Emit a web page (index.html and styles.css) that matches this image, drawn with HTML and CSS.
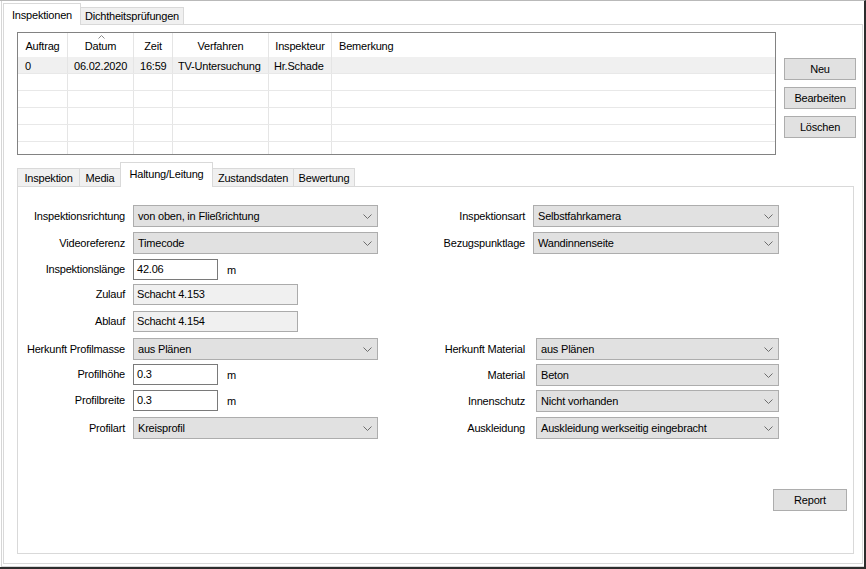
FILE: index.html
```html
<!DOCTYPE html>
<html lang="de">
<head>
<meta charset="utf-8">
<title>Inspektionen</title>
<link rel="stylesheet" href="styles.css">
</head>
<body>
<div class="window">
  <div class="frame">
    <div class="tabstrip outer-tabs">
      <div class="tab active w-insp">Inspektionen</div>
      <div class="tab w-dicht">Dichtheitsprüfungen</div>
    </div>
    <div class="page outer-page">
      <div class="top">
        <div class="list">
          <div class="row head">
            <div class="c c1 center">Auftrag</div>
            <div class="c c2 center sorted">Datum<svg class="sort" width="7" height="4" viewBox="0 0 7 4"><path d="M0.5 3.5 L3.5 0.5 L6.5 3.5" fill="none" stroke="#8a8a8a" stroke-width="1"/></svg></div>
            <div class="c c3 center">Zeit</div>
            <div class="c c4 center">Verfahren</div>
            <div class="c c5 center">Inspekteur</div>
            <div class="c c6 left">Bemerkung</div>
          </div>
          <div class="row data sel">
            <div class="c c1">0</div>
            <div class="c c2">06.02.2020</div>
            <div class="c c3">16:59</div>
            <div class="c c4">TV-Untersuchung</div>
            <div class="c c5">Hr.Schade</div>
            <div class="c c6"></div>
          </div>
          <div class="row data"><div class="c c1"></div><div class="c c2"></div><div class="c c3"></div><div class="c c4"></div><div class="c c5"></div><div class="c c6"></div></div>
          <div class="row data"><div class="c c1"></div><div class="c c2"></div><div class="c c3"></div><div class="c c4"></div><div class="c c5"></div><div class="c c6"></div></div>
          <div class="row data"><div class="c c1"></div><div class="c c2"></div><div class="c c3"></div><div class="c c4"></div><div class="c c5"></div><div class="c c6"></div></div>
          <div class="row data"><div class="c c1"></div><div class="c c2"></div><div class="c c3"></div><div class="c c4"></div><div class="c c5"></div><div class="c c6"></div></div>
          <div class="row data"><div class="c c1"></div><div class="c c2"></div><div class="c c3"></div><div class="c c4"></div><div class="c c5"></div><div class="c c6"></div></div>
        </div>
        <div class="buttons">
          <button class="btn">Neu</button>
          <button class="btn">Bearbeiten</button>
          <button class="btn">Löschen</button>
        </div>
      </div>

      <div class="tabstrip inner-tabs">
        <div class="tab w-i1">Inspektion</div>
        <div class="tab w-i2">Media</div>
        <div class="tab active w-i3">Haltung/Leitung</div>
        <div class="tab w-i4">Zustandsdaten</div>
        <div class="tab w-i5">Bewertung</div>
      </div>
      <div class="page inner-page">
        <div class="form">
          <div class="lbl h22">Inspektionsrichtung</div>
          <div class="fld"><div class="combo"><span>von oben, in Fließrichtung</span><svg width="9" height="5" viewBox="0 0 9 5"><path d="M0.5 0.5 L4.5 4.5 L8.5 0.5" fill="none" stroke="#6d6d6d"/></svg></div></div>
          <div class="lbl h22">Inspektionsart</div>
          <div class="fld"><div class="combo"><span>Selbstfahrkamera</span><svg width="9" height="5" viewBox="0 0 9 5"><path d="M0.5 0.5 L4.5 4.5 L8.5 0.5" fill="none" stroke="#6d6d6d"/></svg></div></div>

          <div class="lbl h22">Videoreferenz</div>
          <div class="fld"><div class="combo"><span>Timecode</span><svg width="9" height="5" viewBox="0 0 9 5"><path d="M0.5 0.5 L4.5 4.5 L8.5 0.5" fill="none" stroke="#6d6d6d"/></svg></div></div>
          <div class="lbl h22">Bezugspunktlage</div>
          <div class="fld"><div class="combo"><span>Wandinnenseite</span><svg width="9" height="5" viewBox="0 0 9 5"><path d="M0.5 0.5 L4.5 4.5 L8.5 0.5" fill="none" stroke="#6d6d6d"/></svg></div></div>

          <div class="lbl h21">Inspektionslänge</div>
          <div class="fld unit"><div class="text">42.06</div><span class="u">m</span></div>
          <div class="empty"></div><div class="empty"></div>

          <div class="lbl h21">Zulauf</div>
          <div class="fld"><div class="ro">Schacht 4.153</div></div>
          <div class="empty"></div><div class="empty"></div>

          <div class="lbl h21">Ablauf</div>
          <div class="fld"><div class="ro">Schacht 4.154</div></div>
          <div class="empty"></div><div class="empty"></div>

          <div class="lbl h22">Herkunft Profilmasse</div>
          <div class="fld"><div class="combo"><span>aus Plänen</span><svg width="9" height="5" viewBox="0 0 9 5"><path d="M0.5 0.5 L4.5 4.5 L8.5 0.5" fill="none" stroke="#6d6d6d"/></svg></div></div>
          <div class="lbl h22">Herkunft Material</div>
          <div class="fld"><div class="combo shift"><span>aus Plänen</span><svg width="9" height="5" viewBox="0 0 9 5"><path d="M0.5 0.5 L4.5 4.5 L8.5 0.5" fill="none" stroke="#6d6d6d"/></svg></div></div>

          <div class="lbl h21">Profilhöhe</div>
          <div class="fld unit"><div class="text">0.3</div><span class="u">m</span></div>
          <div class="lbl h22">Material</div>
          <div class="fld"><div class="combo shift"><span>Beton</span><svg width="9" height="5" viewBox="0 0 9 5"><path d="M0.5 0.5 L4.5 4.5 L8.5 0.5" fill="none" stroke="#6d6d6d"/></svg></div></div>

          <div class="lbl h21">Profilbreite</div>
          <div class="fld unit"><div class="text">0.3</div><span class="u">m</span></div>
          <div class="lbl h22">Innenschutz</div>
          <div class="fld"><div class="combo shift"><span>Nicht vorhanden</span><svg width="9" height="5" viewBox="0 0 9 5"><path d="M0.5 0.5 L4.5 4.5 L8.5 0.5" fill="none" stroke="#6d6d6d"/></svg></div></div>

          <div class="lbl h22">Profilart</div>
          <div class="fld"><div class="combo"><span>Kreisprofil</span><svg width="9" height="5" viewBox="0 0 9 5"><path d="M0.5 0.5 L4.5 4.5 L8.5 0.5" fill="none" stroke="#6d6d6d"/></svg></div></div>
          <div class="lbl h22">Auskleidung</div>
          <div class="fld"><div class="combo shift"><span>Auskleidung werkseitig eingebracht</span><svg width="9" height="5" viewBox="0 0 9 5"><path d="M0.5 0.5 L4.5 4.5 L8.5 0.5" fill="none" stroke="#6d6d6d"/></svg></div></div>
        </div>
        <div class="report">
          <button class="btn btn-report">Report</button>
        </div>
      </div>
    </div>
  </div>
</div>
</body>
</html>
```

FILE: styles.css
```css
* { box-sizing: border-box; }
html, body { margin: 0; padding: 0; background: #fff; }
body {
  font-family: "Liberation Sans", Arial, sans-serif;
  font-size: 11px;
  letter-spacing: -0.2px;
  color: #000;
}

.window {
  width: 866px;
  height: 569px;
  background: #fff;
  border-top: 1px solid #b9b9b9;
  border-right: 2px solid #2d2d2d;
  border-bottom: 2px solid #2d2d2d;
}
.frame {
  height: 100%;
  margin-left: 1px;
  border-left: 1px solid #d6d6d6;
  border-bottom: 1px solid #d6d6d6;
  padding: 2px 0 0 1px;
}

/* tabs */
.tabstrip {
  display: flex;
  align-items: flex-end;
  position: relative;
  z-index: 1;
  margin-bottom: -1px;
}
.tab {
  flex: none;
  border: 1px solid #d9d9d9;
  border-bottom: none;
  background: #f0f0f0;
  text-align: center;
  white-space: nowrap;
  margin-left: -1px;
  margin-bottom: 1px;
}
.tab:first-child { margin-left: 0; }
.tab.active {
  background: #fff;
  margin-bottom: 0;
  position: relative;
  z-index: 2;
}

.outer-tabs { height: 22px; }
.outer-tabs .tab { height: 17px; line-height: 16px; }
.outer-tabs .tab.active { height: 22px; line-height: 20px; padding-top: 1px; }
.w-insp { width: 78px; }
.w-dicht { width: 104px; }

.inner-tabs { height: 25px; margin-top: 7px; }
.inner-tabs .tab { height: 18px; line-height: 18px; }
.inner-tabs .tab.active { height: 25px; line-height: 22px; }
.w-i1 { width: 63px; }
.w-i2 { width: 42px; }
.w-i3 { width: 93px; }
.w-i4 { width: 82px; }
.w-i5 { width: 62px; }

.page {
  border: 1px solid #d9d9d9;
  background: #fff;
}
.outer-page {
  width: 860px;
  height: 540px;
  padding: 7px 0 0 13px;
}

/* top area */
.top {
  display: flex;
  align-items: flex-start;
}
.list {
  flex: none;
  width: 759px;
  height: 123px;
  border: 1px solid #828282;
  overflow: hidden;
}
.row { display: flex; }
.row.head { height: 24px; }
.row.data { height: 17px; border-bottom: 1px solid #e8e8e8; }
.row.sel { background: #f0f0f0; }
.c {
  flex: none;
  border-right: 1px solid #e5e5e5;
  white-space: nowrap;
  overflow: hidden;
  padding-left: 6px;
}
.head .c { line-height: 22px; padding-top: 2px; }
.data .c { line-height: 16px; padding-top: 1px; }
.c1 { width: 50px; padding-left: 7px; }
.c2 { width: 66px; }
.c3 { width: 39px; }
.c4 { width: 96px; padding-left: 5px; }
.c5 { width: 63px; padding-left: 5px; }
.c6 { flex: 1; border-right: none; padding-left: 7px; }
.head .center { text-align: center; padding-left: 0; }
.head .left { text-align: left; }
.sorted { position: relative; }
.sort {
  position: absolute;
  top: 2px;
  left: 30px;
}

.buttons {
  margin-left: 8px;
  margin-top: 26px;
  display: flex;
  flex-direction: column;
  gap: 7px;
}
.btn {
  width: 72px;
  height: 22px;
  padding: 0;
  background: #e1e1e1;
  border: 1px solid #adadad;
  font-family: inherit;
  font-size: 11px;
  letter-spacing: -0.2px;
  color: #000;
  text-align: center;
}

/* inner page */
.inner-page {
  width: 837px;
  height: 368px;
  padding-top: 18px;
}
.form {
  display: grid;
  grid-template-columns: 107px 245px 139px 246px;
  grid-template-rows: 27px 27px 25px 27px 27px 26px 26px 27px 22px;
  column-gap: 8px;
  align-items: start;
}
.lbl { text-align: right; white-space: nowrap; }
.lbl.h22 { line-height: 22px; }
.lbl.h21 { line-height: 21px; }
.combo {
  height: 22px;
  background: #e1e1e1;
  border: 1px solid #adadad;
  display: flex;
  align-items: center;
  justify-content: space-between;
  padding: 0 5px 0 4px;
  white-space: nowrap;
}
.combo.shift { margin-left: 3px; }
.unit { display: flex; align-items: center; gap: 9px; height: 21px; }
.text {
  width: 85px;
  height: 21px;
  border: 1px solid #7a7a7a;
  background: #fff;
  line-height: 19px;
  padding-left: 3px;
}
.ro {
  width: 165px;
  height: 21px;
  border: 1px solid #ababab;
  background: #f0f0f0;
  line-height: 19px;
  padding-left: 3px;
}
.report {
  display: flex;
  justify-content: flex-end;
  margin-top: 50px;
  padding-right: 6px;
}
.btn-report { width: 74px; }
```
